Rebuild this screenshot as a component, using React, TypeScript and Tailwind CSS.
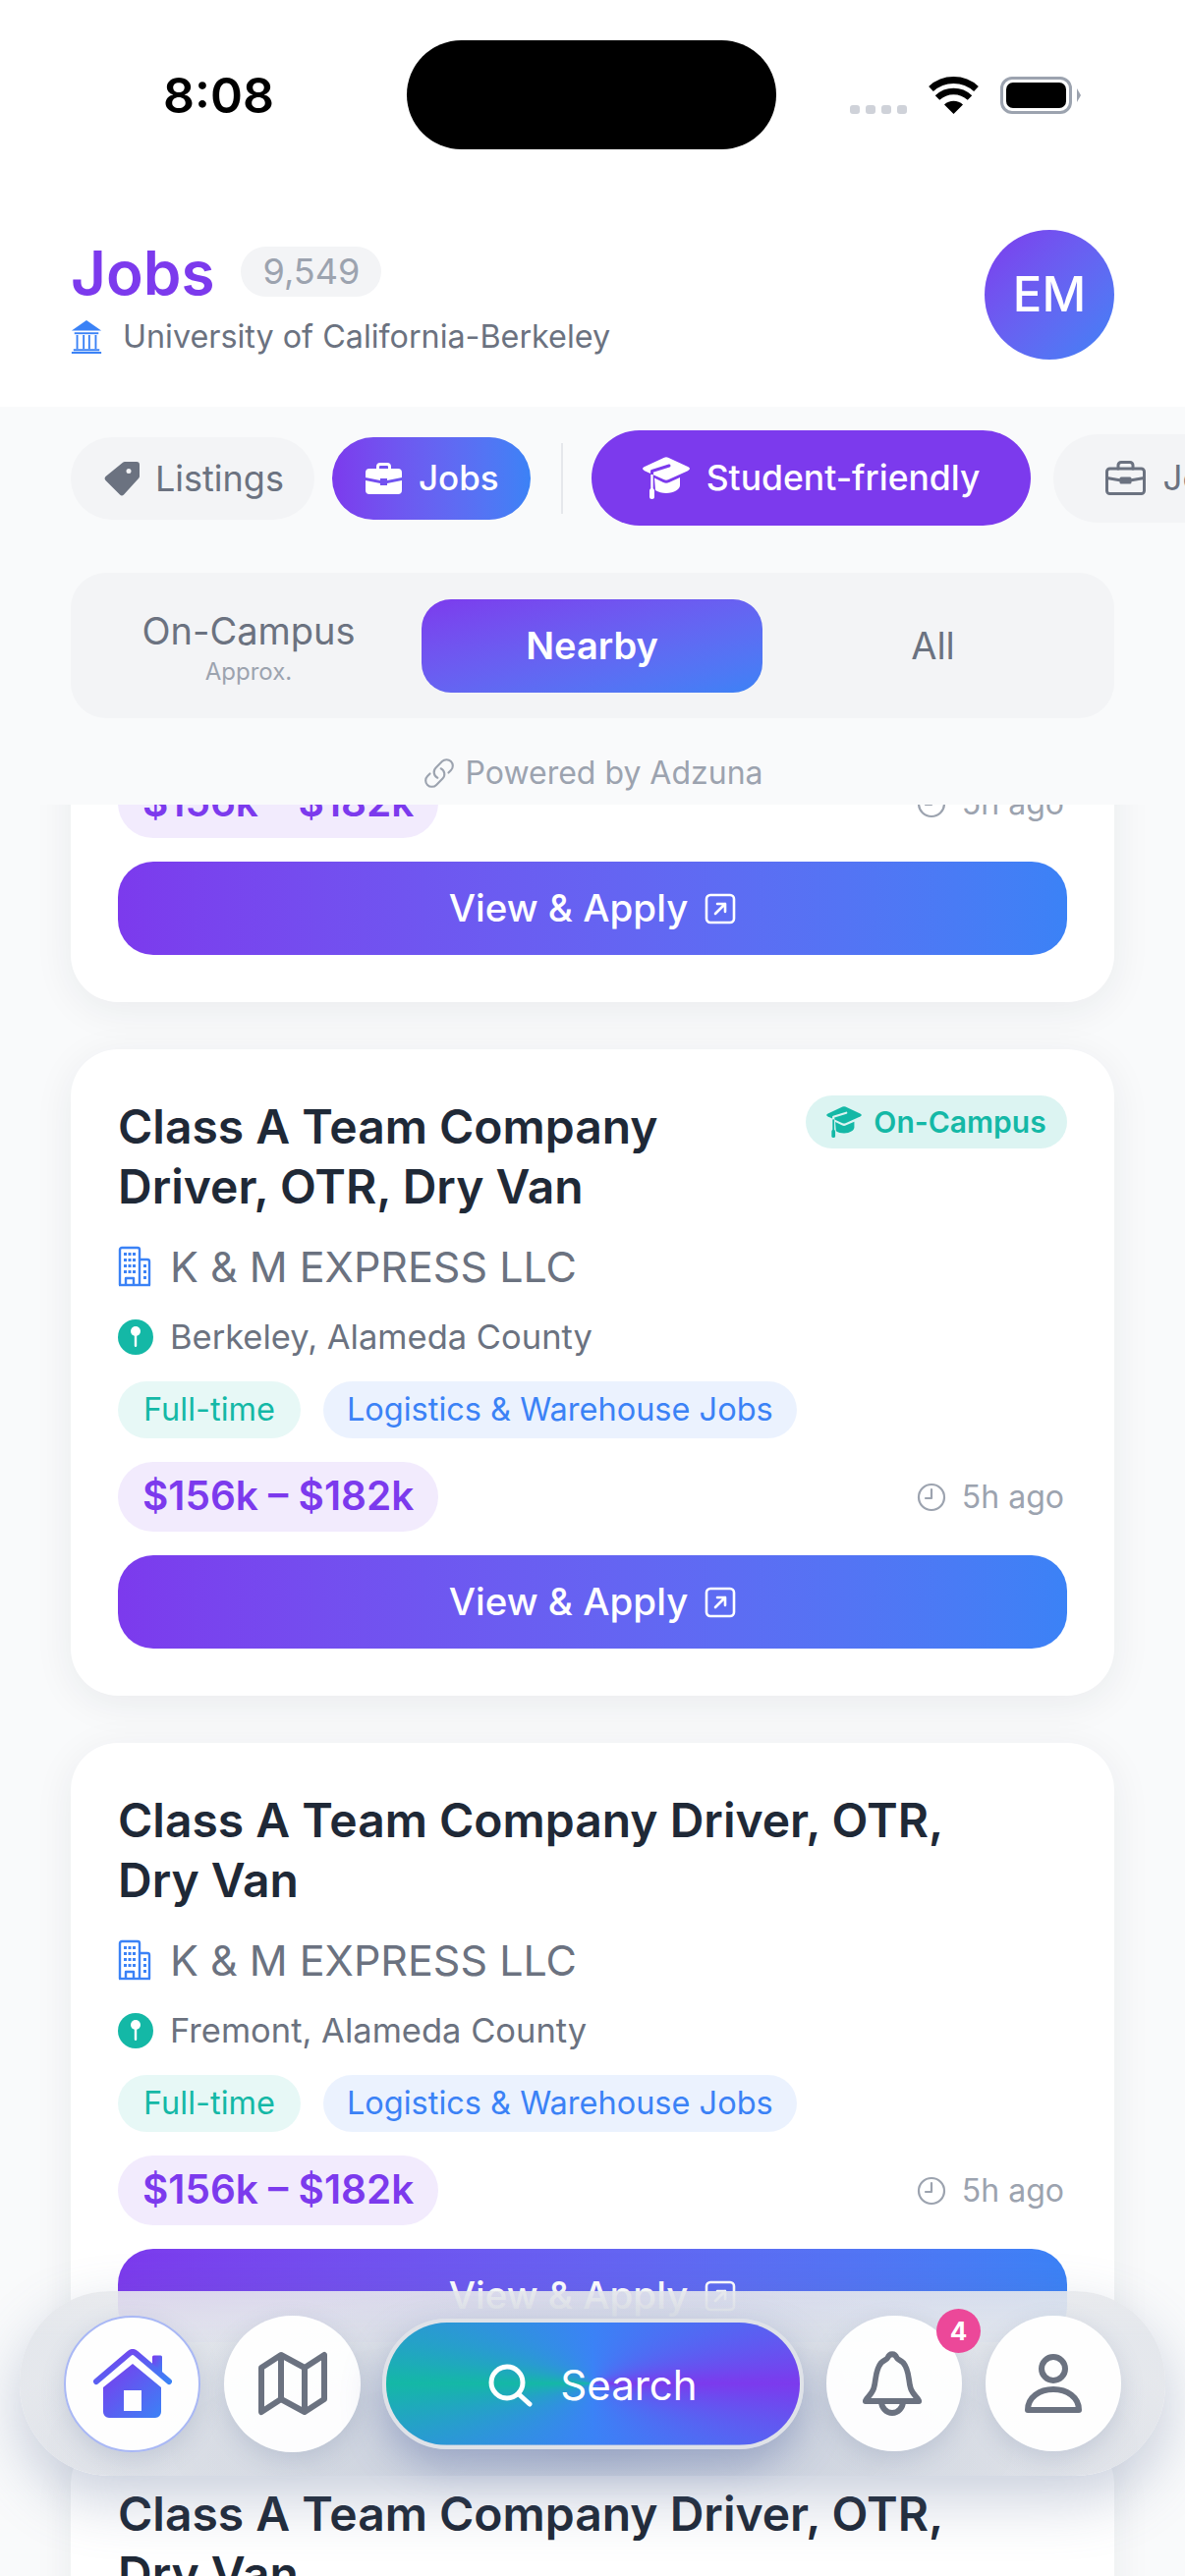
import { HiOutlineLink } from "react-icons/hi2";

const font = { fontFamily: "Inter, 'Noto Sans', sans-serif" };

interface Job {
  title: string;
  location: string;
  onCampus?: boolean;
}

const jobs: Job[] = [
  { title: "Class A Team Company Driver, OTR, Dry Van", location: "Oakland, Alameda County" },
  { title: "Class A Team Company Driver, OTR, Dry Van", location: "Berkeley, Alameda County", onCampus: true },
  { title: "Class A Team Company Driver, OTR, Dry Van", location: "Fremont, Alameda County" },
  { title: "Class A Team Company Driver, OTR, Dry Van", location: "Hayward, Alameda County" },
];

function TagIcon() {
  return (
    <svg viewBox="0 0 36 36" className="w-[36px] h-[36px] shrink-0" fill="#6b7280">
      <path
        fillRule="evenodd"
        d="M21 1h12a3 3 0 0 1 3 3v12a3 3 0 0 1-1 2L20 34.500a3 3 0 0 1-4 0L1.500 20a3 3 0 0 1 0-4L19 1.800A3 3 0 0 1 21 1Zm4 7a2.500 2.500 0 1 0 0 5 2.500 2.500 0 0 0 0-5Z"
      />
    </svg>
  );
}

function BriefcaseSolid() {
  return (
    <svg viewBox="0 0 37 32" className="w-[37px] h-[32px] shrink-0" fill="white">
      <path
        fillRule="evenodd"
        d="M11 6V4a4 4 0 0 1 4-4h7a4 4 0 0 1 4 4v2h7a4 4 0 0 1 4 4v5l-15 3v-2h-7v2L0 15v-5a4 4 0 0 1 4-4h7Zm3 0h9V4a1 1 0 0 0-1-1h-7a1 1 0 0 0-1 1v2Z"
      />
      <path d="M0 18l15 3v2h7v-2l15-3v10a4 4 0 0 1-4 4H4a4 4 0 0 1-4-4V18Z" />
    </svg>
  );
}

function BriefcaseOutline() {
  return (
    <svg viewBox="0 0 41 35" className="w-[41px] h-[35px] shrink-0" fill="none" stroke="#6b7280" strokeWidth="3" strokeLinejoin="round" strokeLinecap="round">
      <rect x="1.500" y="8" width="38" height="25.500" rx="3" />
      <path d="M13 8V4.500a3 3 0 0 1 3-3h9a3 3 0 0 1 3 3V8" />
      <path d="M1.500 17.500 16 20M39.500 17.500 25 20" />
      <path d="M16 18h9v4h-9z" fill="#6b7280" />
    </svg>
  );
}

function CapIcon({ cut, className }: { cut: string; className: string }) {
  return (
    <svg viewBox="0 0 48 43" className={className}>
      <path d="M22 .8a5 5 0 0 1 4 0l20 9.200c2.600 1.200 2.600 3 0 4.200L26 23.200a5 5 0 0 1-4 0L2 14.200C-.6 13-.6 11.200 2 10Z" fill="currentColor" />
      <path d="M12 21.500 21 26a7 7 0 0 0 6 0l11-5v8c0 4-6 8-14 8-4 0-8-1-11-3Z" fill="currentColor" />
      <path d="M27 9 9.500 14.500V20" fill="none" stroke={cut} strokeWidth="3" strokeLinecap="round" strokeLinejoin="round" />
      <path d="M9.500 18v16" stroke="currentColor" strokeWidth="2.400" />
      <rect x="7" y="32" width="5" height="11" rx="2.500" fill="currentColor" />
    </svg>
  );
}

function BuildingIcon() {
  return (
    <svg viewBox="0 0 34 42" className="w-[34px] h-[42px] shrink-0" fill="none" stroke="#3b82f6" strokeWidth="2.400" strokeLinejoin="round">
      <path d="M2 40V4a2 2 0 0 1 2-2h16a2 2 0 0 1 2 2v36" />
      <path d="M22 14h8a2 2 0 0 1 2 2v24" />
      <path d="M1 40h32" />
      <path d="M8 40v-7h8v7" />
      <g fill="#3b82f6" stroke="none">
        <rect x="6" y="7" width="3" height="3" />
        <rect x="10.500" y="7" width="3" height="3" />
        <rect x="15" y="7" width="3" height="3" />
        <rect x="6" y="13" width="3" height="3" />
        <rect x="10.500" y="13" width="3" height="3" />
        <rect x="15" y="13" width="3" height="3" />
        <rect x="6" y="19" width="3" height="3" />
        <rect x="10.500" y="19" width="3" height="3" />
        <rect x="15" y="19" width="3" height="3" />
        <rect x="6" y="25" width="3" height="3" />
        <rect x="10.500" y="25" width="3" height="3" />
        <rect x="15" y="25" width="3" height="3" />
        <rect x="26" y="19" width="3" height="3" />
        <rect x="26" y="25" width="3" height="3" />
        <rect x="26" y="31" width="3" height="3" />
      </g>
    </svg>
  );
}

function Bank() {
  return (
    <svg viewBox="0 0 32 36" className="w-[32px] h-[34px] text-[#3b82f6]" fill="currentColor">
      <path d="M16 0 32 11H0L16 0Z" />
      <path d="M3 13h26v2H3z" />
      <path d="M5 16h2v15H5zM12 16h2v15h-2zM18 16h2v15h-2zM25 16h2v15h-2z" />
      <path d="M2 31h28v2H2zM0 34h32v2H0z" />
    </svg>
  );
}

function Pin() {
  return (
    <span className="w-[36px] h-[36px] rounded-full bg-[#14b8a6] flex items-center justify-center shrink-0">
      <svg viewBox="0 0 12 24" className="w-[12px] h-[24px]" fill="white">
        <circle cx="6" cy="6" r="5" />
        <rect x="4.800" y="8" width="2.400" height="14" rx="1.200" />
      </svg>
    </span>
  );
}

function Clock() {
  return (
    <svg viewBox="0 0 30 30" className="w-[30px] h-[30px] text-[#9ca3af]" fill="none" stroke="currentColor" strokeWidth="2.200" strokeLinecap="round" strokeLinejoin="round">
      <circle cx="15" cy="15" r="13" />
      <path d="M15 7v9H9" />
    </svg>
  );
}

function ExternalSquare() {
  return (
    <svg viewBox="0 0 32 32" className="w-[32px] h-[32px]" fill="none" stroke="white" strokeWidth="2.600" strokeLinecap="round" strokeLinejoin="round">
      <rect x="2" y="2" width="28" height="28" rx="4" />
      <path d="M11 21 21 11M13 11h8v8" />
    </svg>
  );
}

function JobCard({ job }: { job: Job }) {
  return (
    <div className="bg-white rounded-[48px] p-[48px] shadow-[0_8px_40px_rgba(31,41,55,0.07)]">
      <div className="flex items-start justify-between gap-[24px]">
        <h2 className="text-[48px] leading-[61px] font-semibold text-[#1f2937] pr-[60px]">{job.title}</h2>
        {job.onCampus && (
          <span className="shrink-0 mt-[-1px] h-[54px] w-[266px] rounded-full bg-[#14b8a6]/15 flex items-center justify-center gap-[12px] text-[#14b8a6] text-[30px] font-semibold">
            <CapIcon cut="#dcf3f0" className="w-[36px] h-[32px] text-[#14b8a6]" />
            On-Campus
          </span>
        )}
      </div>
      <div className="flex items-center gap-[19px] mt-[23px] h-[56px] text-[#6b7280] text-[43px]">
        <BuildingIcon />
        K &amp; M EXPRESS LLC
      </div>
      <div className="flex items-center gap-[17px] mt-[23px] h-[42px] text-[#6b7280] text-[34.500px]">
        <Pin />
        {job.location}
      </div>
      <div className="flex gap-[23px] mt-[24px] text-[32.500px]">
        <span className="h-[58px] px-[26px] rounded-full bg-[#14b8a6]/10 text-[#14b8a6] flex items-center">Full-time</span>
        <span className="h-[58px] px-[24px] rounded-full bg-[#3b82f6]/10 text-[#3b82f6] flex items-center">Logistics &amp; Warehouse Jobs</span>
      </div>
      <div className="flex items-center justify-between mt-[24px]">
        <span className="h-[71px] px-[25px] rounded-full bg-[#7c3aed]/10 text-[#7c3aed] flex items-center text-[40.500px] font-semibold">$156k – $182k</span>
        <span className="flex items-center gap-[16px] pr-[3px] text-[32px] text-[#9ca3af]">
          <Clock />
          5h ago
        </span>
      </div>
      <button className="mt-[24px] w-full h-[95px] rounded-[36px] bg-gradient-to-r from-[#7c3aed] to-[#3b82f6] text-white text-[38.500px] font-medium flex items-center justify-center gap-[17px]">
        View &amp; Apply
        <ExternalSquare />
      </button>
    </div>
  );
}

function BottomNav() {
  return (
    <div className="absolute left-[20px] right-[20px] top-[2332px] h-[188px] rounded-[92px] bg-[radial-gradient(ellipse_at_50%_85%,rgba(193,201,216,0.98),rgba(230,232,236,0)_75%),linear-gradient(180deg,rgba(230,232,236,0.9),rgba(228,231,236,0.98)_25%,rgba(230,232,236,0.98))] shadow-[0_24px_60px_rgba(90,110,150,0.32)] flex items-center px-[45px]">
      <button className="w-[139px] h-[139px] rounded-full bg-white/95 border-[2px] border-[#a9b8f5] flex items-center justify-center shadow-[0_8px_24px_rgba(90,110,150,0.2)]">
        <svg viewBox="0 0 80 70" className="w-[80px] h-[70px]">
          <defs>
            <linearGradient id="homeFill" x1="0" y1="0" x2="1" y2="1">
              <stop offset="0%" stopColor="#7c3aed" />
              <stop offset="100%" stopColor="#3b82f6" />
            </linearGradient>
          </defs>
          <path d="M60 8a1.500 1.500 0 0 1 1.500-1.500h7a1.500 1.500 0 0 1 1.500 1.500v16l-10-8Z" fill="url(#homeFill)" />
          <path d="M3 33 36.500 4.500q3.500-3 7 0L77 33" fill="none" stroke="url(#homeFill)" strokeWidth="6" strokeLinecap="round" />
          <path d="M40 15 69 39V64a6 6 0 0 1-6 6H16a6 6 0 0 1-6-6V39ZM31 42v21h18V42Z" fill="url(#homeFill)" fillRule="evenodd" />
        </svg>
      </button>
      <button className="ml-[24px] w-[139px] h-[139px] rounded-full bg-white/95 flex items-center justify-center shadow-[0_8px_24px_rgba(90,110,150,0.2)]">
        <svg viewBox="0 0 70 66" className="w-[70px] h-[66px]" fill="none" stroke="#6b7280" strokeWidth="6" strokeLinejoin="round">
          <path d="M3 17 23 4 47 17 67 4V49L47 62 23 49 3 62Z" />
          <path d="M23 4V49M47 17V62" />
        </svg>
      </button>
      <div className="ml-[22px] shrink-0 rounded-[66px] shadow-[0_16px_40px_rgba(80,100,160,0.4)]">
        <button className="relative overflow-hidden w-[429px] h-[133px] rounded-[66px] border-[4px] border-[#dfe2e8] flex items-center justify-center gap-[28px] text-white text-[42px] pt-[3px]">
          {/* square sweep stretched across the pill */}
          <span className="absolute left-1/2 top-1/2 w-[125px] h-[125px] -translate-x-1/2 -translate-y-1/2 scale-x-[3.4] bg-[conic-gradient(from_270deg,#14b8a6,#3b82f6,#7c3aed,#3b82f6,#14b8a6)]" />
          <svg viewBox="0 0 45 44" className="relative w-[45px] h-[44px]" fill="none" stroke="white" strokeWidth="5" strokeLinecap="round">
            <circle cx="19" cy="19" r="16" />
            <path d="M31 31 42 41" />
          </svg>
          <span className="relative">Search</span>
        </button>
      </div>
      <button className="relative ml-[23px] shrink-0 w-[138px] h-[138px] rounded-full bg-white/95 flex items-center justify-center shadow-[0_8px_24px_rgba(90,110,150,0.2)]">
        <svg viewBox="0 0 66 68" className="w-[66px] h-[68px]" fill="none" stroke="#6b7280" strokeWidth="6" strokeLinejoin="round" strokeLinecap="round">
          <path d="M4 52c0-2 7-7 9-13 3-9 1-18 8-26 3-3 6-3 7-5 2-5 8-5 10 0 1 2 4 2 7 5 7 8 5 17 8 26 2 6 9 11 9 13Z" transform="scale(0.94 1)" />
          <path d="M20 52a11 12 0 0 0 22 0" />
        </svg>
        <span className="absolute top-[-7px] right-[-19px] w-[45px] h-[45px] rounded-full bg-[#ec4899] text-white text-[26px] font-bold flex items-center justify-center">4</span>
      </button>
      <button className="ml-[24px] shrink-0 w-[138px] h-[138px] rounded-full bg-white/95 flex items-center justify-center shadow-[0_8px_24px_rgba(90,110,150,0.2)]">
        <svg viewBox="0 0 58 62" className="w-[58px] h-[62px]" fill="none" stroke="#6b7280" strokeWidth="6" strokeLinejoin="round">
          <circle cx="29" cy="16" r="12" />
          <path d="M3 58c0-13 12-21 26-21s26 8 26 21Z" />
        </svg>
      </button>
    </div>
  );
}

export default function App() {
  return (
    <div className="relative w-[1206px] h-[2622px] overflow-hidden bg-[#f9fafb] flex flex-col" style={font}>
      <div className="bg-white h-[414px] shrink-0">
        <div className="relative h-[194px]">
          <span className="absolute left-[166px] top-[67px] text-[50px] leading-[60px] font-semibold text-black">8:08</span>
          <div className="absolute left-[414px] top-[41px] w-[376px] h-[111px] rounded-full bg-black" />
          <div className="absolute left-[865px] top-[107px] flex gap-[6px]">
            <span className="w-[10px] h-[9px] rounded-[3px] bg-[#cfd2d9]" />
            <span className="w-[10px] h-[9px] rounded-[3px] bg-[#cfd2d9]" />
            <span className="w-[10px] h-[9px] rounded-[3px] bg-[#cfd2d9]" />
            <span className="w-[10px] h-[9px] rounded-[3px] bg-[#cfd2d9]" />
          </div>
          <svg viewBox="0 0 51 38" className="absolute left-[945px] top-[78px] w-[51px] h-[38px]">
            <path d="M25.500 38 16 28.500a14 14 0 0 1 19 0Z" fill="black" />
            <path d="M9 21.500a24 24 0 0 1 33 0" fill="none" stroke="black" strokeWidth="6.500" />
            <path d="M2.500 12.500a34 34 0 0 1 46 0" fill="none" stroke="black" strokeWidth="7" />
          </svg>
          <div className="absolute left-[1018px] top-[78px] w-[73px] h-[38px] rounded-[12px] border-[3px] border-[#9ca3af] p-[3px]">
            <div className="w-full h-full rounded-[7px] bg-black" />
          </div>
          <div className="absolute left-[1096px] top-[90px] w-0 h-0 border-y-[7px] border-y-transparent border-l-[4px] border-l-[#9ca3af]" />
        </div>
        <div className="flex items-start justify-between pl-[72px] pr-[72px]">
          <div className="pt-[54px]">
            <div className="flex items-center gap-[27px] h-[56px]">
              <span className="text-[62px] leading-[62px] font-semibold text-[#7c3aed] relative top-[2px]">Jobs</span>
              <span className="h-[51px] w-[143px] rounded-full bg-[#f3f4f6] text-[#9ca3af] text-[36px] flex items-center justify-center">9,549</span>
            </div>
            <div className="flex items-center gap-[21px] mt-[15px] text-[32.300px] text-[#6b7280]">
              <Bank />
              University of California-Berkeley
            </div>
          </div>
          <div className="mt-[40px] w-[132px] h-[132px] rounded-full bg-gradient-to-br from-[#7c3aed] to-[#3b82f6] text-white text-[49px] font-medium flex items-center justify-center">EM</div>
        </div>
      </div>

      <div className="relative z-10 bg-[#f9fafb] h-[405px] shrink-0">
        <div className="flex items-center pl-[72px] h-[145px] w-[1206px] overflow-hidden">
          <div className="flex items-center gap-[16px] h-[84px] pl-[34px] pr-[31px] rounded-full bg-[#f3f4f6] text-[#6b7280] text-[36px] shrink-0">
            <TagIcon />
            Listings
          </div>
          <div className="ml-[18px] flex items-center gap-[17px] h-[84px] pl-[34px] pr-[32px] rounded-full bg-gradient-to-r from-[#7c3aed] to-[#3b82f6] text-white text-[35px] font-medium shrink-0">
            <BriefcaseSolid />
            Jobs
          </div>
          <div className="ml-[31px] w-[2px] h-[72px] bg-[#e5e7eb] shrink-0" />
          <div className="ml-[29px] flex items-center gap-[17px] h-[97px] px-[52px] rounded-full bg-[#7c3aed] text-white text-[35.500px] font-medium shrink-0">
            <CapIcon cut="#7c3aed" className="w-[48px] h-[43px] text-white" />
            Student-friendly
          </div>
          <div className="ml-[23px] flex items-center gap-[17px] h-[90px] pl-[53px] pr-[50px] rounded-full bg-[#f3f4f6] text-[#6b7280] text-[35px] shrink-0">
            <BriefcaseOutline />
            Jobs
          </div>
        </div>
        <div className="mx-[72px] mt-[24px] h-[148px] rounded-[36px] bg-[#f3f4f6] flex items-center px-[27px]">
          <div className="w-[308px] mr-[22px] text-center pt-[4px]">
            <div className="text-[38px] leading-[44px] text-[#6b7280]">On-Campus</div>
            <div className="text-[24px] leading-[28px] text-[#9ca3af] mt-[6px]">Approx.</div>
          </div>
          <div className="w-[347px] h-[95px] rounded-[30px] bg-gradient-to-br from-[#7c3aed] to-[#3b82f6] text-white text-[38px] font-semibold flex items-center justify-center">Nearby</div>
          <div className="flex-1 pl-[16px] text-center text-[38px] text-[#6b7280]">All</div>
        </div>
        <div className="mt-[32px] flex items-center justify-center gap-[10px] text-[32px] text-[#9ca3af]">
          <HiOutlineLink className="w-[34px] h-[34px]" />
          Powered by Adzuna
        </div>
      </div>

      <div className="flex-1 overflow-hidden px-[72px]">
        <div className="flex flex-col gap-[48px] mt-[-457px]">
          {jobs.map((job, i) => (
            <JobCard key={i} job={job} />
          ))}
        </div>
      </div>

      <BottomNav />
    </div>
  );
}
